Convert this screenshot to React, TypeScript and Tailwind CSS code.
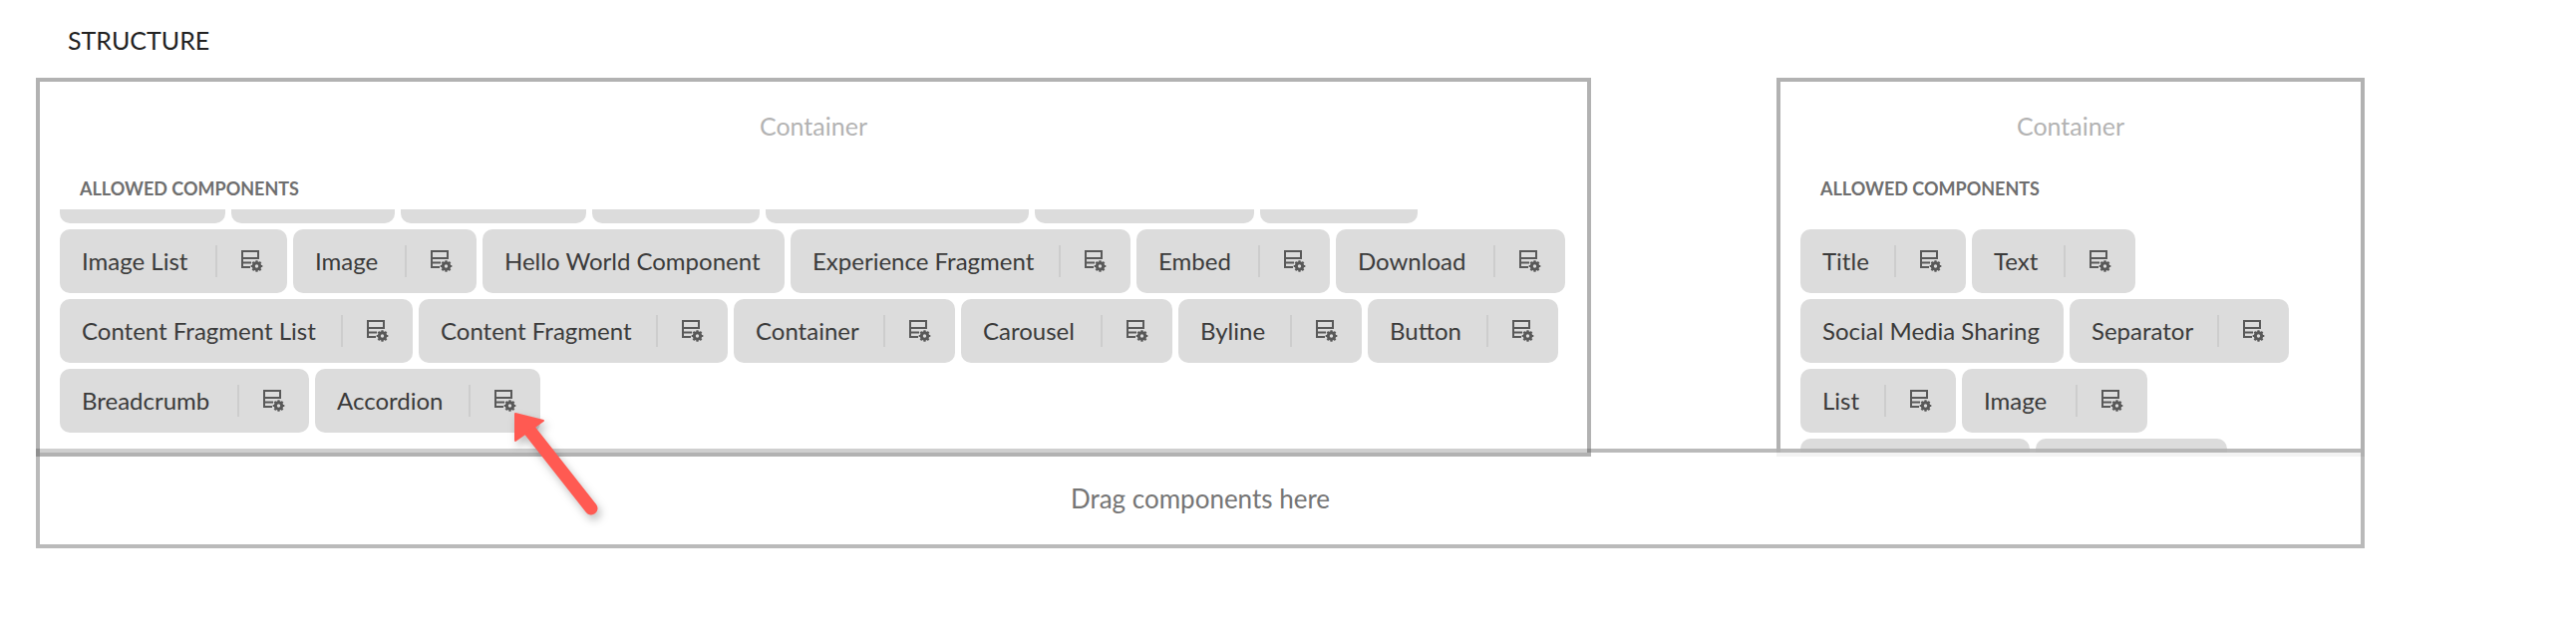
const LEFT_CHIPS = [
  { name: "", w: "w-[166px]", cfg: false },
  { name: "", w: "w-[164px]", cfg: false },
  { name: "", w: "w-[186px]", cfg: false },
  { name: "", w: "w-[168px]", cfg: false },
  { name: "", w: "w-[264px]", cfg: false },
  { name: "", w: "w-[220px]", cfg: false },
  { name: "", w: "w-[158px]", cfg: false },
  { name: "Image List", w: "w-[228px]", cfg: true },
  { name: "Image", w: "w-[184px]", cfg: true },
  { name: "Hello World Component", w: "w-[303px]", cfg: false },
  { name: "Experience Fragment", w: "w-[341px]", cfg: true },
  { name: "Embed", w: "w-[194px]", cfg: true },
  { name: "Download", w: "w-[230px]", cfg: true },
  { name: "Content Fragment List", w: "w-[354px]", cfg: true },
  { name: "Content Fragment", w: "w-[310px]", cfg: true },
  { name: "Container", w: "w-[222px]", cfg: true },
  { name: "Carousel", w: "w-[212px]", cfg: true },
  { name: "Byline", w: "w-[184px]", cfg: true },
  { name: "Button", w: "w-[191px]", cfg: true },
  { name: "Breadcrumb", w: "w-[250px]", cfg: true },
  { name: "Accordion", w: "w-[226px]", cfg: true },
];

const RIGHT_CHIPS = [
  { name: "Title", w: "w-[166px]", cfg: true },
  { name: "Text", w: "w-[164px]", cfg: true },
  { name: "Social Media Sharing", w: "w-[264px]", cfg: false },
  { name: "Separator", w: "w-[220px]", cfg: true },
  { name: "List", w: "w-[156px]", cfg: true },
  { name: "Image", w: "w-[186px]", cfg: true },
  { name: "", w: "w-[230px]", cfg: false },
  { name: "", w: "w-[192px]", cfg: false },
];

function ConfigIcon() {
  return (
    <svg width="22" height="22" viewBox="0 0 22 22" className="shrink-0 text-[#595959]">
      <path d="M1 1h16v7H1z M1 8v9h8 M1 12.5h9" fill="none" stroke="currentColor" strokeWidth="2" />
      <circle cx="15.5" cy="16" r="3.2" fill="#dcdcdc" stroke="currentColor" strokeWidth="3" />
      <path d="M15.5 10.2v2.6 M15.5 19.2v2.6 M9.7 16h2.6 M18.7 16h2.6 M11.4 11.9l1.9 1.9 M17.7 18.2l1.9 1.9 M19.6 11.9l-1.9 1.9 M13.3 18.2l-1.9 1.9" stroke="currentColor" strokeWidth="2.2" />
    </svg>
  );
}

function Chip({ name, w, cfg }: { name: string; w: string; cfg: boolean }) {
  return (
    <div className={`${w} h-16 shrink-0 flex items-center rounded-[10px] bg-[#dcdcdc] pl-[22px] text-[24px] text-[#3b3b3b]`}>
      <span className="whitespace-nowrap pb-[1px]">{name}</span>
      {cfg && (
        <div className="ml-auto flex items-center pr-[24px]">
          <div className="h-8 w-[2px] bg-[#cdcdcd]" />
          <div className="ml-[24px]">
            <ConfigIcon />
          </div>
        </div>
      )}
    </div>
  );
}

function Container({ className, chips, offset }: { className: string; chips: typeof LEFT_CHIPS; offset: string }) {
  return (
    <div className={`${className} h-[380px] shrink-0 border-4 border-black/30`}>
      <div className="pt-[26px] text-center text-[25px] leading-[36px] text-[#b3b3b3]">Container</div>
      <div className="mt-[33px] pl-[40px] text-[18px] leading-[24px] font-bold text-[#6e6e6e]">ALLOWED COMPONENTS</div>
      <div className="mt-[9px] h-[244px] overflow-hidden">
        <div className={`${offset} ml-[20px] flex flex-wrap gap-[6px]`}>
          {chips.map((c, i) => (
            <Chip key={i} {...c} />
          ))}
        </div>
      </div>
    </div>
  );
}

export default function App() {
  return (
    <div className="relative h-[644px] w-[2584px] bg-white font-['Lato',sans-serif]">
      <div className="px-[36px] pt-[24px]">
        <div className="pl-[32px] text-[25px] leading-[32px] text-[#222]">STRUCTURE</div>
        <div className="mt-[22px] flex w-[2336px] justify-between">
          <Container className="relative z-20 w-[1560px] bg-white/30" chips={LEFT_CHIPS} offset="-mt-[50px]" />
          <Container className="w-[590px]" chips={RIGHT_CHIPS} offset="mt-[20px]" />
        </div>
        <div className="relative z-10 -mt-[8px] flex h-[100px] w-[2336px] items-center justify-center border-4 border-black/[0.27] bg-white/85 text-[26px] text-[#757575]">
          Drag components here
        </div>
      </div>
      <svg className="absolute top-0 left-0 z-30 drop-shadow-[3px_5px_4px_rgba(0,0,0,0.25)]" width="2584" height="644">
        <path d="M530 430 L593 510" stroke="#ff5a52" strokeWidth="13" strokeLinecap="round" />
        <path d="M517 415 L545 422 L517 442 Z" fill="#ff5a52" stroke="#ff5a52" strokeWidth="2" strokeLinejoin="round" />
      </svg>
    </div>
  );
}
